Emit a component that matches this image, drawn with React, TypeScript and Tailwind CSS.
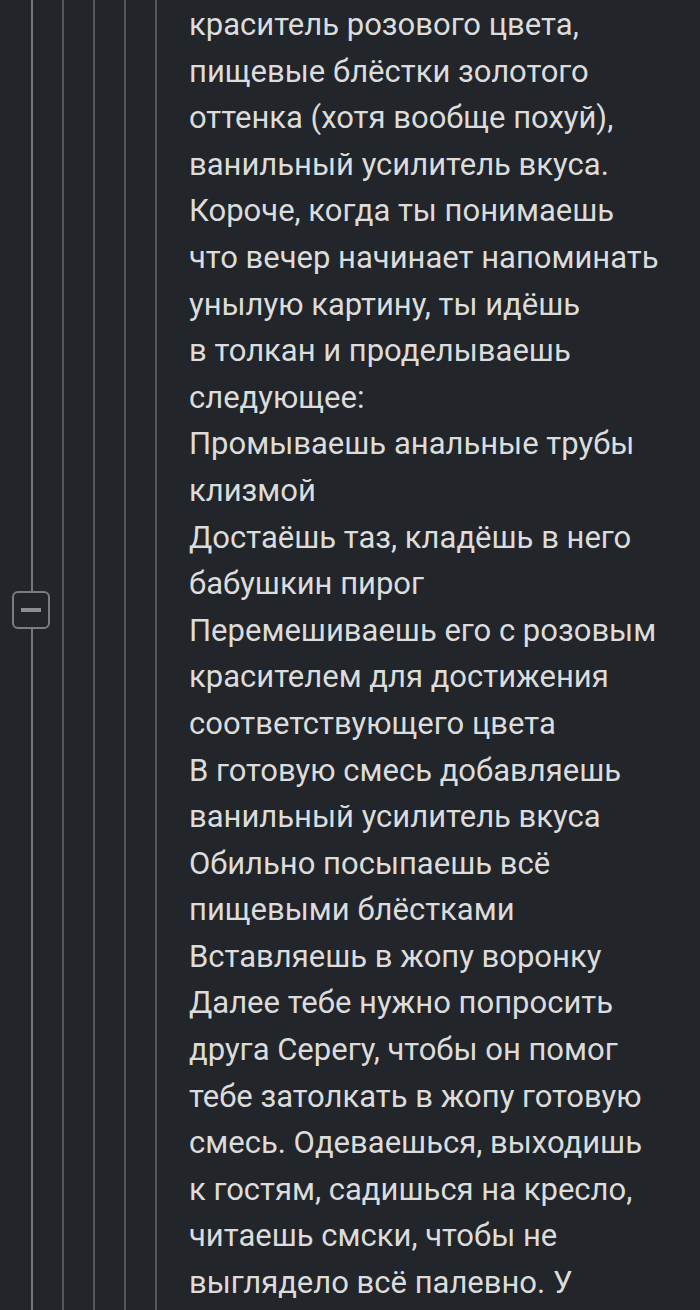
const lines = [
  'краситель розового цвета,',
  'пищевые блёстки золотого',
  'оттенка (хотя вообще похуй),',
  'ванильный усилитель вкуса.',
  'Короче, когда ты понимаешь',
  'что вечер начинает напоминать',
  'унылую картину, ты идёшь',
  'в толкан и проделываешь',
  'следующее:',
  'Промываешь анальные трубы',
  'клизмой',
  'Достаёшь таз, кладёшь в него',
  'бабушкин пирог',
  'Перемешиваешь его с розовым',
  'красителем для достижения',
  'соответствующего цвета',
  'В готовую смесь добавляешь',
  'ванильный усилитель вкуса',
  'Обильно посыпаешь всё',
  'пищевыми блёстками',
  'Вставляешь в жопу воронку',
  'Далее тебе нужно попросить',
  'друга Серегу, чтобы он помог',
  'тебе затолкать в жопу готовую',
  'смесь. Одеваешься, выходишь',
  'к гостям, садишься на кресло,',
  'читаешь смски, чтобы не',
  'выглядело всё палевно. У',
];

function Branch() {
  return (
    <div className="w-[31px] shrink-0 flex justify-center">
      <div className="w-[2px] h-full bg-[#53565a]" />
    </div>
  );
}

export default function App() {
  return (
    <div className="w-[700px] h-[1310px] overflow-hidden bg-[#222529] flex">
      <div className="flex pl-[16px] h-full">
        <div className="relative w-[31px] shrink-0 flex justify-center">
          <div className="w-[2px] h-full bg-[#74777b]" />
          <button className="absolute top-[591px] left-[-4px] w-[38px] h-[38px] rounded-[6px] border-2 border-[#7a7d81] bg-[#222529] flex items-center justify-center">
            <span className="block w-[20px] h-[4px] bg-[#8a8d91]" />
          </button>
        </div>
        <Branch />
        <Branch />
        <Branch />
        <Branch />
      </div>
      <div
        className="pl-[18px] mt-[2px] text-[31px] leading-[46.6px] text-[#dcdcdc] whitespace-nowrap"
        style={{ fontFamily: 'Roboto, "Noto Sans", sans-serif' }}
      >
        {lines.map((l, i) => (
          <div key={i}>{l}</div>
        ))}
      </div>
    </div>
  );
}
